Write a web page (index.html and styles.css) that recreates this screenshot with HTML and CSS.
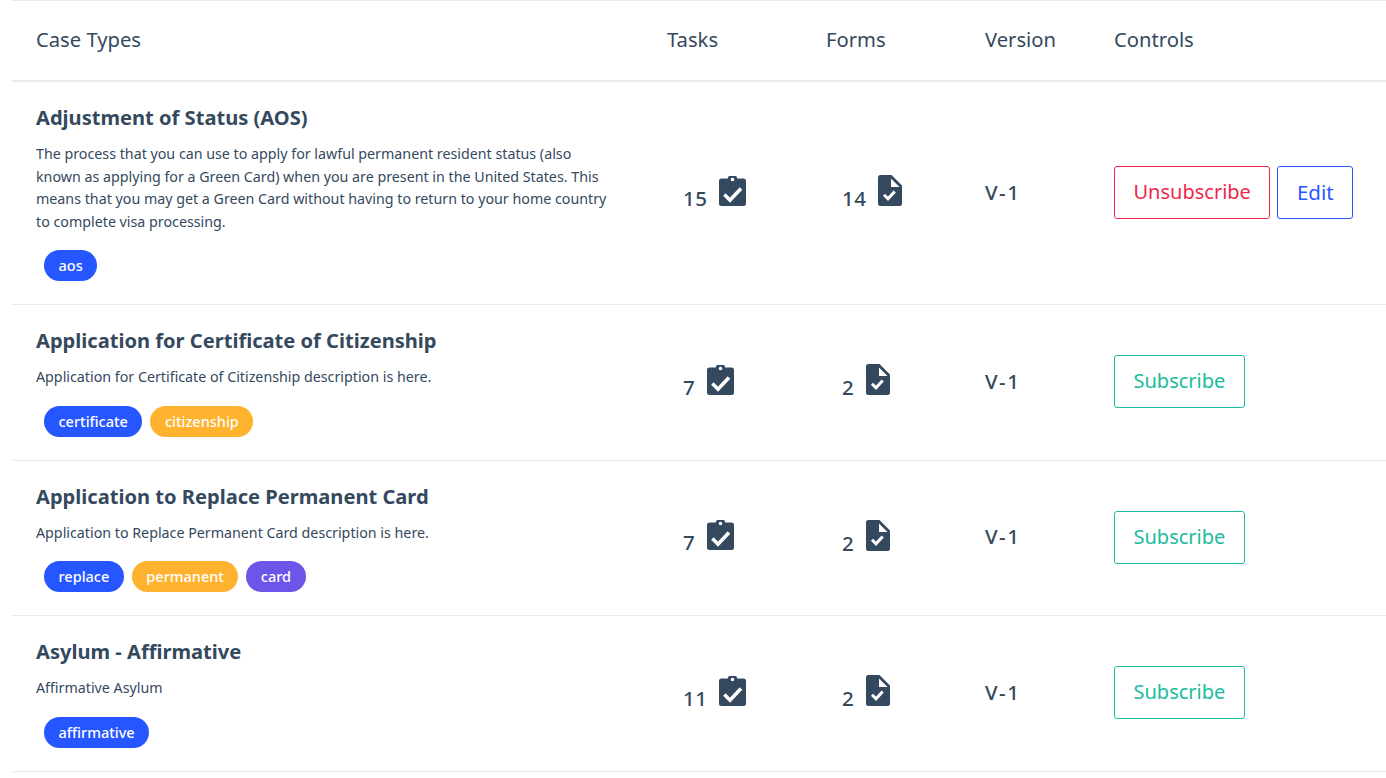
FILE: index.html
```html
<!DOCTYPE html>
<html lang="en">
<head>
<meta charset="utf-8">
<title>Case Types</title>
<link rel="stylesheet" href="styles.css">
</head>
<body>
<svg class="defs" width="0" height="0" aria-hidden="true">
  <symbol id="clip" viewBox="0 0 27 30">
    <path fill-rule="evenodd" d="M2.500 2.500H8.800a4.800 4.800 0 0 1 9.400 0h6.300A2.500 2.500 0 0 1 27 5v22.500a2.500 2.500 0 0 1-2.500 2.500h-22A2.500 2.500 0 0 1 0 27.500V5A2.500 2.500 0 0 1 2.500 2.500zM13.500 1.700a1.800 1.800 0 1 0 0 3.600 1.800 1.800 0 0 0 0-3.600z"/>
    <path class="tick" d="M5.400 18.600l5.600 5.600L22 12.400"/>
  </symbol>
  <symbol id="file" viewBox="0 0 24 31">
    <path fill-rule="evenodd" d="M2.500 0H13.500L24 10.500V28.500a2.500 2.500 0 0 1-2.500 2.500h-19A2.500 2.500 0 0 1 0 28.500v-26A2.500 2.500 0 0 1 2.500 0zM13 3.500V12h8.500z"/>
    <path class="tick small" d="M6 19.800l4 4 6.700-7.400"/>
  </symbol>
</svg>
<main class="table">
  <div class="row head">
    <div>Case Types</div><div>Tasks</div><div>Forms</div><div>Version</div><div>Controls</div>
  </div>
  <div class="row">
    <div class="info">
      <h2>Adjustment of Status (AOS)</h2>
      <p>The process that you can use to apply for lawful permanent resident status (also known as applying for a Green Card) when you are present in the United States. This means that you may get a Green Card without having to return to your home country to complete visa processing.</p>
      <div class="tags"><span class="tag blue">aos</span></div>
    </div>
    <div class="count"><span>15</span><svg class="ico-clip"><use href="#clip"/></svg></div>
    <div class="count"><span>14</span><svg class="ico-file"><use href="#file"/></svg></div>
    <div class="ver">V-1</div>
    <div class="ctrl"><button class="btn red">Unsubscribe</button><button class="btn blue-o">Edit</button></div>
  </div>
  <div class="row">
    <div class="info">
      <h2>Application for Certificate of Citizenship</h2>
      <p>Application for Certificate of Citizenship description is here.</p>
      <div class="tags"><span class="tag blue">certificate</span><span class="tag orange">citizenship</span></div>
    </div>
    <div class="count"><span>7</span><svg class="ico-clip"><use href="#clip"/></svg></div>
    <div class="count"><span>2</span><svg class="ico-file"><use href="#file"/></svg></div>
    <div class="ver">V-1</div>
    <div class="ctrl"><button class="btn green">Subscribe</button></div>
  </div>
  <div class="row">
    <div class="info">
      <h2>Application to Replace Permanent Card</h2>
      <p>Application to Replace Permanent Card description is here.</p>
      <div class="tags"><span class="tag blue">replace</span><span class="tag orange">permanent</span><span class="tag purple">card</span></div>
    </div>
    <div class="count"><span>7</span><svg class="ico-clip"><use href="#clip"/></svg></div>
    <div class="count"><span>2</span><svg class="ico-file"><use href="#file"/></svg></div>
    <div class="ver">V-1</div>
    <div class="ctrl"><button class="btn green">Subscribe</button></div>
  </div>
  <div class="row">
    <div class="info">
      <h2>Asylum - Affirmative</h2>
      <p>Affirmative Asylum</p>
      <div class="tags"><span class="tag blue">affirmative</span></div>
    </div>
    <div class="count"><span>11</span><svg class="ico-clip"><use href="#clip"/></svg></div>
    <div class="count"><span>2</span><svg class="ico-file"><use href="#file"/></svg></div>
    <div class="ver">V-1</div>
    <div class="ctrl"><button class="btn green">Subscribe</button></div>
  </div>
</main>
</body>
</html>
```
FILE: styles.css
```css
* { box-sizing: border-box; }
html, body { margin: 0; background: #fff; overflow: hidden; }
body { height: 778px; font-family: "Noto Sans", sans-serif; color: #34495e; }
.defs { position: absolute; }
.table { margin-left: 12px; border-top: 1px solid #e9ecef; }
.row {
  display: grid;
  grid-template-columns: 631px 159px 159px 129px 1fr;
  align-items: center;
  border-bottom: 1px solid #e9ecef;
}
.row > div { padding-left: 24px; }
.head { height: 81px; padding-bottom: 4px; font-size: 20.200px; border-bottom-width: 2px; }
.info { padding: 21px 0 23px; }
.info h2 { margin: 0; font-size: 20.100px; line-height: 30px; font-weight: 700; }
.info p { margin: 10px 36px 0 0; font-size: 14.250px; line-height: 22.500px; }
.tags { display: flex; gap: 8px; margin: 17px 0 0 8px; }
.tag { height: 31px; padding: 0 14.500px; border-radius: 16px; color: #fff; font-size: 14.500px; font-weight: 500; line-height: 31px; }
.blue { background: #2656ff; }
.orange { background: #ffb22e; }
.purple { background: #6c55e9; }
.count { display: flex; align-items: baseline; font-size: 20.500px; font-weight: 500; }
.count span { margin-left: 16px; line-height: 25px; letter-spacing: 0.500px; }
.count svg { fill: #34495e; margin-left: 12px; }
.ico-clip { width: 27px; height: 30px; }
.ico-file { width: 24px; height: 31px; }
.tick { fill: none; stroke: #fff; stroke-width: 3.600; }
.tick.small { stroke-width: 3; }
.ver { font-size: 20.500px; font-weight: 500; letter-spacing: 1.500px; padding-bottom: 3px; }
.ctrl { display: flex; gap: 7px; padding-bottom: 1px; }
.btn { height: 53px; padding: 0 18.500px 2px; background: #fff; border: 1px solid; border-radius: 3px; font: 400 20px "Noto Sans", sans-serif; }
.red { color: #f0284a; border-color: #f0284a; }
.blue-o { color: #2656ff; border-color: #2656ff; font-size: 20.500px; }
.green { color: #1abc9c; border-color: #1abc9c; }
```
